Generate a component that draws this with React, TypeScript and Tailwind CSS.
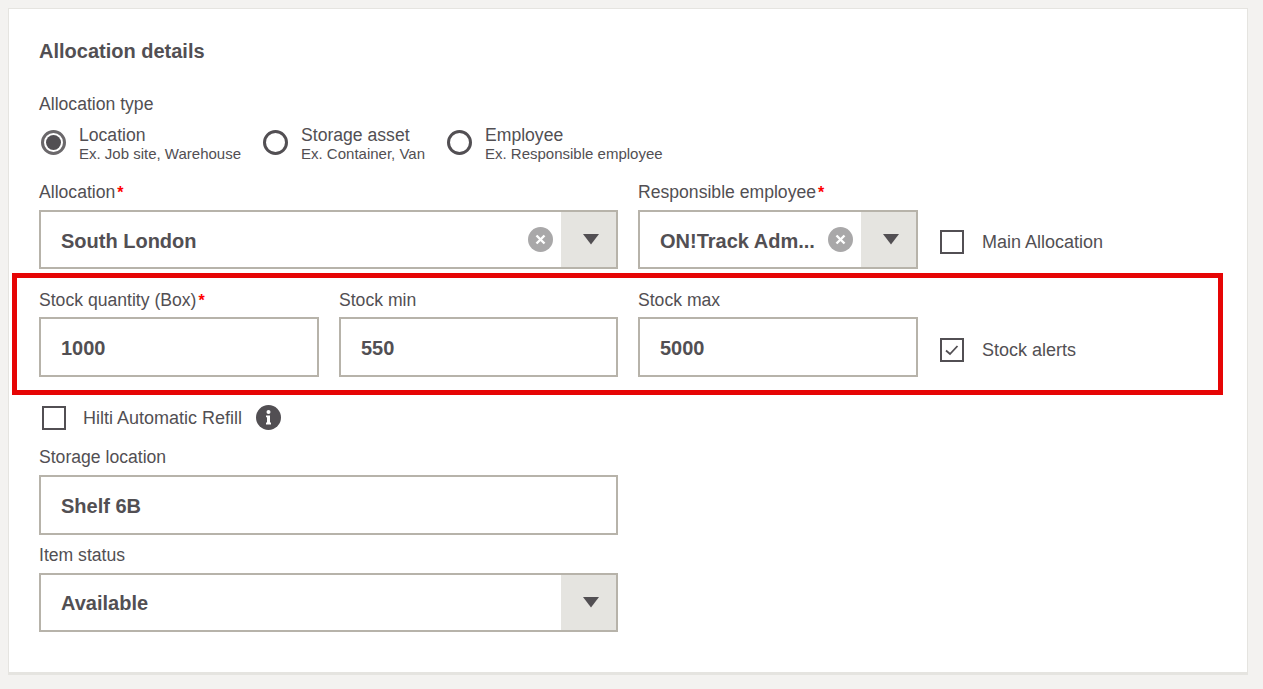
const Label = ({ text, required, className = "" }: { text: string; required?: boolean; className?: string }) => (
  <div className={`h-6 text-[17.6px] leading-6 whitespace-nowrap ${className}`}>
    {text}
    {required && <span className="ml-[2px] text-base font-bold text-[#ff0000]">*</span>}
  </div>
);

const Radio = ({ title, hint, checked }: { title: string; hint: string; checked?: boolean }) => (
  <div className="flex items-center">
    <span className={`mb-[3px] flex h-[25px] w-[25px] items-center justify-center rounded-full border-[3px] ${checked ? "border-[#6b686b]" : "border-[#524f53]"}`}>
      {checked && <span className="h-[15px] w-[15px] rounded-full bg-[#524f53]" />}
    </span>
    <div className="ml-[13px]">
      <div className="h-[20px] text-[17.6px] leading-[20px]">{title}</div>
      <div className="h-[18px] text-[15px] leading-[18px]">{hint}</div>
    </div>
  </div>
);

const Checkbox = ({ label, checked, className = "", labelClass = "ml-[18px]" }: { label: string; checked?: boolean; className?: string; labelClass?: string }) => (
  <div className={`flex items-center text-[18px] leading-6 ${className}`}>
    <span className="flex h-6 w-6 items-center justify-center border-2 border-[#524f53]">
      {checked && (
        <svg width="16" height="12" viewBox="0 0 16 12" fill="none">
          <path d="M2 6.5 L6 10 L13.5 2" stroke="#524f53" strokeWidth="1.8" />
        </svg>
      )}
    </span>
    <span className={`whitespace-nowrap ${labelClass}`}>{label}</span>
  </div>
);

const TextInput = ({ value }: { value: string }) => (
  <div className="flex h-[60px] items-center border-2 border-[#b7b3aa] pl-5 pt-[1px] text-xl font-bold">{value}</div>
);

const ClearIcon = () => (
  <svg width="25" height="25" viewBox="0 0 25 25" className="shrink-0">
    <circle cx="12.5" cy="12.5" r="12.5" fill="#a9a8a9" />
    <path d="M8.5 8.5 L16.5 16.5 M16.5 8.5 L8.5 16.5" stroke="#ffffff" strokeWidth="2.4" />
  </svg>
);

const Select = ({ value, clearable }: { value: string; clearable?: boolean }) => (
  <div className="flex h-[59px] items-stretch border-2 border-[#b7b3aa]">
    <div className="flex min-w-0 flex-1 items-center pl-5 pr-[8px] text-xl font-bold">
      <span className={`min-w-0 flex-1 whitespace-nowrap ${clearable ? "pt-[2px]" : ""}`}>{value}</span>
      {clearable && <ClearIcon />}
    </div>
    <div className="flex w-[55px] shrink-0 items-center justify-center bg-[#e5e4e0] pl-[5px]">
      <svg width="16" height="11" viewBox="0 0 16 11">
        <path d="M0 0 H16 L8 10.5 Z" fill="#524f53" />
      </svg>
    </div>
  </div>
);

export default function App() {
  return (
    <div className="h-[689px] overflow-hidden bg-[#f3f2f0] pl-2 pt-2 font-['Liberation_Sans',Arial,sans-serif] text-[#524f53]">
      <div className="relative h-[667px] w-[1240px] border border-b-[3px] border-[#e5e4e0] bg-white pl-[30px]">
        <h2 className="pt-[30px] text-xl font-bold leading-6">Allocation details</h2>

        <Label text="Allocation type" className="mt-[29px]" />
        <div className="mt-[9px] flex gap-[22px] pl-[2px]">
          <Radio title="Location" hint="Ex. Job site, Warehouse" checked />
          <Radio title="Storage asset" hint="Ex. Container, Van" />
          <Radio title="Employee" hint="Ex. Responsible employee" />
        </div>

        <div className="mt-[17px] grid grid-cols-[280px_279px_280px_auto] gap-x-5">
          <div className="col-span-2">
            <Label text="Allocation" required className="mb-[6px]" />
            <Select value="South London" clearable />
          </div>
          <div>
            <Label text="Responsible employee" required className="mb-[6px]" />
            <Select value="ON!Track Adm..." clearable />
          </div>
          <Checkbox label="Main Allocation" className="mt-[50px] ml-[2px] self-start" />
        </div>

        <div className="mt-[19px] grid grid-cols-[280px_279px_280px_auto] gap-x-5">
          <div>
            <Label text="Stock quantity (Box)" required className="mb-[5px]" />
            <TextInput value="1000" />
          </div>
          <div>
            <Label text="Stock min" className="mb-[5px]" />
            <TextInput value="550" />
          </div>
          <div>
            <Label text="Stock max" className="mb-[5px]" />
            <TextInput value="5000" />
          </div>
          <Checkbox label="Stock alerts" checked labelClass="ml-[18px] pt-[1px]" className="mt-[49px] ml-[2px] self-start" />
        </div>

        <div className="mt-[28px] flex items-center pl-[3px]">
          <Checkbox label="Hilti Automatic Refill" labelClass="ml-[17px]" />
          <svg width="25" height="25" viewBox="0 0 25 25" className="ml-[14px]">
            <circle cx="12.5" cy="12.5" r="12.5" fill="#524f53" />
            <circle cx="12.5" cy="7" r="2" fill="#ffffff" />
            <path d="M10 10.5 H14 V17.5 H15 V19.5 H10 V17.5 H11 V12.3 H10 Z" fill="#ffffff" />
          </svg>
        </div>

        <div className="w-[579px]">
          <Label text="Storage location" className="mt-[15px] mb-[6px]" />
          <TextInput value="Shelf 6B" />
          <Label text="Item status" className="mt-[8px] mb-[6px]" />
          <Select value="Available" />
        </div>

        <div className="absolute left-[3px] top-[264px] h-[122px] w-[1211px] border-[5px] border-[#e60505]" />
      </div>
    </div>
  );
}
